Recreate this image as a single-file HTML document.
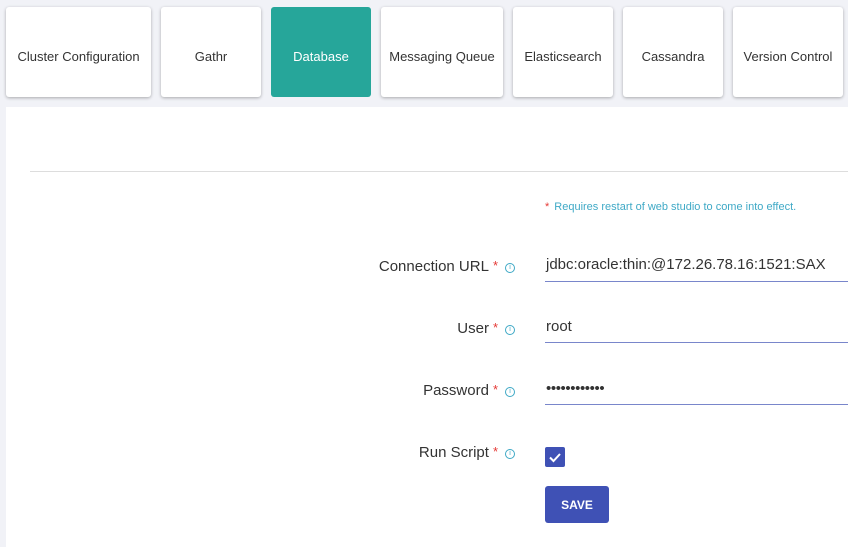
<!DOCTYPE html>
<html><head><style>
body{margin:0;width:848px;height:536px;background:#f1f2f7;font-family:"Liberation Sans",sans-serif;position:relative;overflow:hidden}
.tab{position:absolute;top:7px;height:90px;box-sizing:border-box;padding-top:8px;background:#fff;border-radius:3px;box-shadow:0 1px 3px rgba(0,0,0,.3);display:flex;align-items:center;justify-content:center;font-size:13px;color:#333}
.tab.act{background:#26a69a;color:#fff;box-shadow:none}
.panel{position:absolute;left:6px;top:107px;width:850px;height:440px;background:#fff}
.hr{position:absolute;left:30px;right:0;top:171px;border-top:1px solid #ddd}
.lbl{position:absolute;right:350px;font-size:15px;color:#333;text-align:right}
.lbl b{color:#e53935;font-weight:normal;font-size:13px;margin-left:4px;vertical-align:top}
.info{position:absolute;left:505px;width:8px;height:8px;border:1px solid #3fa9c6;border-radius:50%;font-size:7px;color:#3fa9c6;text-align:center;line-height:8px}
.inp{position:absolute;left:545px;right:0;border-bottom:1px solid #7986cb;font-size:15px;color:#333;padding-left:1px}
</style></head><body>
<div class="tab" style="left:6px;width:145px">Cluster Configuration</div>
<div class="tab" style="left:161px;width:100px">Gathr</div>
<div class="tab act" style="left:271px;width:100px">Database</div>
<div class="tab" style="left:381px;width:122px">Messaging Queue</div>
<div class="tab" style="left:513px;width:100px">Elasticsearch</div>
<div class="tab" style="left:623px;width:100px">Cassandra</div>
<div class="tab" style="left:733px;width:110px">Version Control</div>
<div class="panel"></div>
<div class="hr"></div>
<div style="position:absolute;left:545px;top:201px;font-size:11px;color:#3fa9c6"><span style="color:#e53935;margin-right:5px">*</span>Requires restart of web studio to come into effect.</div>

<div class="lbl" style="top:258px">Connection URL<b>*</b></div><div class="info" style="top:263px">i</div>
<div class="inp" style="top:256px;height:25px">jdbc:oracle:thin:@172.26.78.16:1521:SAX</div>

<div class="lbl" style="top:320px">User<b>*</b></div><div class="info" style="top:325px">i</div>
<div class="inp" style="top:318px;height:24px">root</div>

<div class="lbl" style="top:382px">Password<b>*</b></div><div class="info" style="top:387px">i</div>
<div class="inp" style="top:380px;height:24px;font-size:15px;letter-spacing:-0.4px;line-height:18px">••••••••••••</div>

<div class="lbl" style="top:444px">Run Script<b>*</b></div><div class="info" style="top:449px">i</div>
<div style="position:absolute;left:545px;top:447px;width:20px;height:20px;background:#3f51b5;border-radius:2px">
<svg width="20" height="20"><path d="M5 10.5l3.5 3.5 6.5-7" stroke="#fff" stroke-width="2" fill="none"/></svg></div>
<div style="position:absolute;left:545px;top:486px;width:64px;height:37px;background:#3f51b5;border-radius:3px;color:#fff;font-weight:bold;font-size:12px;display:flex;align-items:center;justify-content:center">SAVE</div>
</body></html>
